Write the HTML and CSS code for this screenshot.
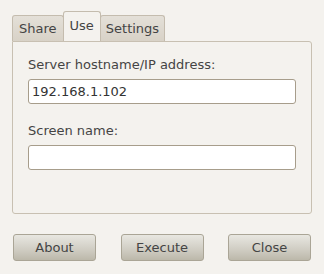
FILE: index.html
```html
<!DOCTYPE html>
<html>
<head>
    <meta charset="UTF-8">
    <title>Client settings</title>
    <link rel="stylesheet" href="styles.css">
</head>
<body>
    <!-- Tabs -->
    <div class="tab-bar">
        <div class="tab">Share</div>
        <div class="tab active">Use</div>
        <div class="tab">Settings</div>
    </div>

    <!-- Use tab page -->
    <div class="panel">
        <label for="server-host">Server hostname/IP address:</label>
        <input type="text" id="server-host" value="192.168.1.102">

        <label for="screen-name" class="second">Screen name:</label>
        <input type="text" id="screen-name">
    </div>

    <!-- Dialog buttons -->
    <div class="button-row">
        <button class="dialog-button">About</button>
        <button class="dialog-button">Execute</button>
        <button class="dialog-button">Close</button>
    </div>
</body>
</html>
```

FILE: styles.css
```css
/* General Styling */
body {
    font-family: 'DejaVu Sans', sans-serif;
    font-size: 13px;
    margin: 0;
    padding: 12px 12px 0 12px;
    background-color: #f4f2ee;
    color: #444;
}

/* Tabs */
.tab-bar {
    display: flex;
    align-items: flex-end;
    height: 29px;
    position: relative;
    z-index: 1;
}

.tab {
    height: 25px;
    line-height: 25px;
    padding: 0 6px;
    background: linear-gradient(#e4e0d8, #d8d2c7);
    border: 1px solid #c4bcae;
    border-bottom: none;
    border-radius: 3px 3px 0 0;
}

.tab + .tab {
    margin-left: -1px;
}

.tab:last-child {
    padding: 0 5px;
}

.tab.active {
    height: 29px;
    line-height: 27px;
    background: #f4f2ee;
    padding: 0 6px;
}

/* Tab page */
.panel {
    height: 171px;
    border: 1px solid #c8c0b2;
    border-radius: 0 3px 3px 3px;
    padding: 0 15px;
    display: flex;
    flex-direction: column;
}

.panel label {
    margin-top: 15px;
    height: 16px;
}

.panel label.second {
    margin-top: 19px;
}

.panel input {
    margin-top: 6px;
    height: 25px;
    box-sizing: border-box;
    border: 1px solid #a79d8b;
    border-radius: 3px;
    background: #fff;
    padding: 0 3px;
    font-family: 'DejaVu Sans', sans-serif;
    font-size: 13px;
    color: #333;
    outline: none;
}

/* Buttons */
.button-row {
    display: flex;
    justify-content: space-between;
    margin-top: 20px;
    padding: 0 1px;
}

.dialog-button {
    width: 83px;
    height: 27px;
    font-family: 'DejaVu Sans', sans-serif;
    font-size: 13px;
    color: #444;
    border: 1px solid #aaa596;
    border-radius: 3px;
    background: linear-gradient(#e8e7e1, #cfccc2 60%, #bcb8aa);
    padding: 0;
}
```
